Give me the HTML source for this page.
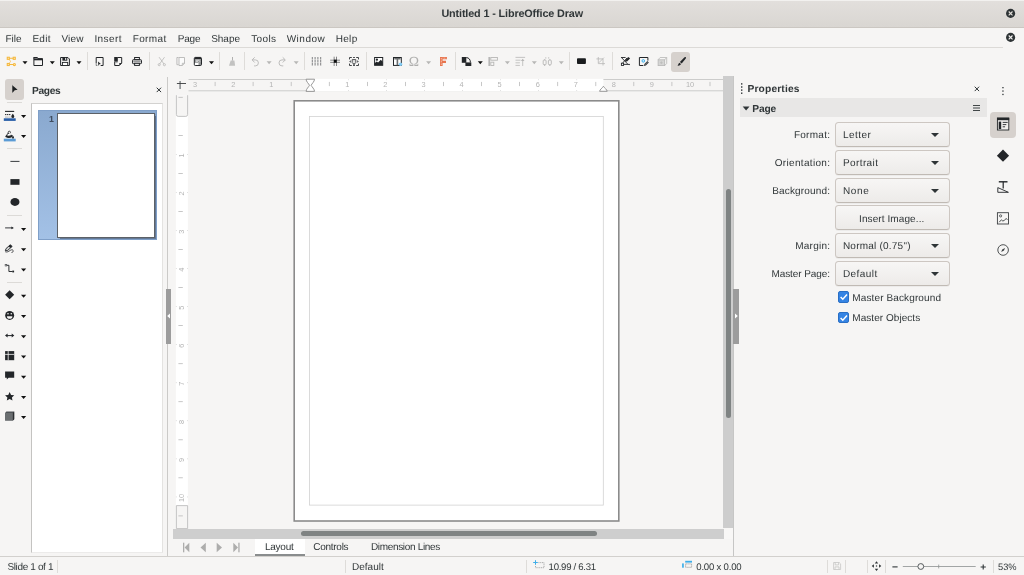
<!DOCTYPE html>
<html lang="en"><head><meta charset="utf-8"><title>Untitled 1 - LibreOffice Draw</title>
<style>
html,body{margin:0;padding:0;}
body{width:1024px;height:575px;overflow:hidden;background:#f6f5f4;position:relative;font-family:"Liberation Sans",sans-serif;color:#2e3436;}
div,span,svg{position:absolute;box-sizing:border-box;}
.t{white-space:nowrap;line-height:1em;margin-left:-0.6px;}
#titlebar{left:0;top:0;width:1024px;height:28px;background:linear-gradient(#e2dfdc,#d9d6d2);border-top:1px solid #f2f1ef;border-bottom:1.3px solid #cbc7c2;}
#menubar{left:0;top:28px;width:1024px;height:20px;background:#f6f5f4;}
#menuline{left:0;top:47px;width:1003px;height:1px;background:#dcdad7;}
.vsep{width:1px;background:#dedcd9;}
.hsep{height:1px;background:#dcdad7;}
.active{background:#d6d1cd;border-radius:3px;}
.combo{left:834.7px;width:115px;height:25px;border:1px solid #cdc7c2;border-bottom-color:#c0bab4;border-radius:3.5px;background:linear-gradient(#f7f6f5,#edebe9);box-shadow:0 1px 0 rgba(0,0,0,0.04);}
.combo i{position:absolute;right:9.3px;top:10.4px;width:0;height:0;border-left:4.1px solid transparent;border-right:4.1px solid transparent;border-top:4.4px solid #2e3436;}
.chk{left:837.6px;width:11.7px;height:11.7px;border-radius:2px;background:#3584e4;border:0.5px solid #2a6fc4;}
.arr{width:0;height:0;border-left:2.5px solid transparent;border-right:2.5px solid transparent;border-top:3px solid #111;}
.arr.g{border-top-color:#b5b5b3;}

</style></head><body>
<div id="titlebar"></div>
<svg style="left:1005px;top:8px" width="11" height="11" viewBox="0 0 11 11"><circle cx="5.6" cy="5.4" r="4.55" fill="#2e3436"/><path d="M3.7 3.5l3.8 3.8M7.5 3.5l-3.8 3.8" stroke="#e4e1dd" stroke-width="1.1"/></svg>
<div id="menubar"></div>
<svg style="left:1005px;top:32px" width="11" height="11" viewBox="0 0 11 11"><circle cx="5.6" cy="5.4" r="4.55" fill="#2e3436"/><path d="M3.7 3.5l3.8 3.8M7.5 3.5l-3.8 3.8" stroke="#f6f5f4" stroke-width="1.1"/></svg>
<div id="menuline"></div>

<!-- toolbar separators -->
<div class="vsep" style="left:87px;top:52px;height:18px"></div>
<div class="vsep" style="left:149px;top:52px;height:18px"></div>
<div class="vsep" style="left:219px;top:52px;height:18px"></div>
<div class="vsep" style="left:244px;top:52px;height:18px"></div>
<div class="vsep" style="left:304px;top:52px;height:18px"></div>
<div class="vsep" style="left:366px;top:52px;height:18px"></div>
<div class="vsep" style="left:455px;top:52px;height:18px"></div>
<div class="vsep" style="left:569px;top:52px;height:18px"></div>
<div class="vsep" style="left:612px;top:52px;height:18px"></div>
<div class="active" style="left:671px;top:51.5px;width:19px;height:20px"></div>
<svg style="left:0;top:48px" width="700" height="28" viewBox="0 48 700 28" fill="none">
<g transform="translate(6.7 56.7)"><g stroke="#f5b83d" stroke-width="1.05" fill="#fbe9c4"><rect x="0.55" y="0.55" width="2.1" height="2.1"/><rect x="6.5" y="0.55" width="2.1" height="2.1"/><rect x="0.55" y="6.75" width="2.1" height="2.1"/><circle cx="7.65" cy="7.8" r="1.1"/><path d="M2.7 1.5h3.8M2.7 7.8h3.8" fill="none"/><path d="M2.4 2.9c0.9 0.5 1.4 1 1.4 1.8s-0.5 1.3-1.4 1.8" fill="none" stroke-width="0.9" opacity="0.75"/></g></g>
<path d="M22.50 61.20h5.0l-2.5 3.0z" fill="#111"/>
<g transform="translate(33.4 57)"><path d="M0.5 0.5h3.2l0.9 1.1h4.5v6.9h-8.6z" stroke="#232629" stroke-width="1"/><rect x="0.5" y="1.6" width="8.6" height="1.7" fill="#232629"/><path d="M0 0h3.9l1 1.4h-4.9z" fill="#232629" opacity="0.75"/></g>
<path d="M49.80 61.20h5.0l-2.5 3.0z" fill="#111"/>
<g transform="translate(60.1 57)"><path d="M0.5 0.5h7.3l1.5 1.5v6.5h-8.8z" stroke="#232629" stroke-width="1"/><rect x="2.3" y="0.5" width="4.9" height="3.2" fill="#232629"/><rect x="5.0" y="0.9" width="1.1" height="2" fill="#e8e8e8"/><rect x="2.3" y="5.4" width="5.3" height="3.1" stroke="#232629" stroke-width="0.9" fill="#fff"/></g>
<path d="M76.50 61.20h5.0l-2.5 3.0z" fill="#111"/>
<g transform="translate(95.7 57)"><path d="M0.5 6v-5.5h6.9v8h-2.4" stroke="#232629" stroke-width="1"/><path d="M2.3 4.6l2.9 2.4l-1.6 0.3l-0.9 1.6z" fill="#232629"/><path d="M0.5 6v2.5h1.2" stroke="#232629" stroke-width="1" opacity="0.55"/></g>
<g transform="translate(114.2 57)"><path d="M3.4 0.5h4.1v5.6l-2.4 2.4h-4.6v-3.6" stroke="#232629" stroke-width="1"/><rect x="0" y="0" width="3.6" height="4.7" fill="#232629"/><path d="M5.1 8.5v-2.4h2.4z" fill="#232629"/><rect x="1.2" y="5.3" width="2.2" height="0.8" fill="#232629" opacity="0.5"/></g>
<g transform="translate(132 57)"><rect x="2.6" y="0.5" width="4.8" height="2.2" stroke="#232629" stroke-width="1"/><rect x="0.5" y="2.7" width="9" height="4" rx="0.8" stroke="#232629" stroke-width="1" fill="#d7d7d7"/><rect x="1.4" y="3.5" width="7.2" height="1.5" fill="#9a9b9c"/><rect x="2.6" y="6.3" width="4.8" height="2.1" stroke="#232629" stroke-width="1" fill="#fff"/></g>
<g transform="translate(157.8 57)"><g stroke="#b7b7b6" stroke-width="0.8"><path d="M1.3 0.2l4.9 6.8M6.7 0.2l-4.9 6.8"/><circle cx="1.4" cy="7.7" r="1.05"/><circle cx="6.6" cy="7.7" r="1.05"/></g></g>
<g transform="translate(176.4 57)"><g stroke="#b7b7b6" stroke-width="0.9"><path d="M2.2 0.5h-1.7v7.2h1.7"/><path d="M2.6 0.5h5.5v5.8l-2.2 2.2h-3.3z" fill="#fbfbfb"/><path d="M5.9 8.5v-2.2h2.2" /></g></g>
<g transform="translate(193.8 56.8)"><rect x="0.5" y="0.6" width="7.2" height="8.1" rx="1.1" stroke="#232629" stroke-width="1" fill="#909293"/><path d="M0.9 2.2v-0.6q0-1.1 1.1-1.1h4.2q1.1 0 1.1 1.1v0.6z" fill="#232629"/><rect x="2" y="3.0" width="3.8" height="0.75" fill="#f2f2f2"/><rect x="2" y="4.4" width="2.2" height="0.7" fill="#e6e6e6"/><rect x="1.1" y="6.0" width="3.6" height="2.2" fill="#fff"/><path d="M4.7 6l1.8-1.8" stroke="#e8e8e8" stroke-width="0.6"/></g>
<path d="M209.00 61.20h5.0l-2.5 3.0z" fill="#111"/>
<g transform="translate(229.1 57)"><path d="M3.4 0v3.6" stroke="#b0b0af" stroke-width="1"/><path d="M1.6 3.5h3.7l0.7 5.3h-6.1z" fill="#c2c2c1"/></g>
<g transform="translate(251.4 57)"><g stroke="#b7b7b6" stroke-width="0.9"><path d="M0.8 2.9h3.2a3 3 0 0 1 0 6h-1.3"/><path d="M3.3 0.3l-2.6 2.6l2.6 2.6"/></g></g>
<path d="M266.60 61.20h5.0l-2.5 3.0z" fill="#b7b7b6"/>
<g transform="translate(278 57)"><g stroke="#b7b7b6" stroke-width="0.9"><path d="M7.2 2.9h-3.2a3 3 0 0 0 0 6h1.3"/><path d="M4.7 0.3l2.6 2.6l-2.6 2.6"/></g></g>
<path d="M293.70 61.20h5.0l-2.5 3.0z" fill="#b7b7b6"/>
<g transform="translate(311.6 57)"><g stroke="#3f4245" stroke-width="0.65" stroke-dasharray="2.4 0.45"><path d="M0.7 0v9M3.5 0v9M6.3 0v9M9.1 0v9"/></g></g>
<g transform="translate(330.2 56.7)"><g stroke="#26292b" stroke-width="0.55"><path d="M3.95 0v9.3M6.3 0v9.3M0 3.5h9.8M0 5.65h9.8"/></g><rect x="3.7" y="3.0" width="2.8" height="3.0" fill="#0c0d0e"/></g>
<g transform="translate(349 57)"><g stroke="#3f4245" stroke-width="1"><path d="M0.5 2.4v-1.9h2.3M7.2 0.5h2.3v1.9M9.5 6.6v1.9h-2.3M2.8 8.5h-2.3v-1.9"/><path d="M4 0.5h2M4 8.5h2" stroke-width="0.9"/><path d="M3.2 2.6h3.6v3l-1 1.2h-1.6l-1-1.2z" stroke-width="0.9" fill="#e4e4e3"/></g><path d="M0.2 4.5l1.6-1.3v2.6zM9.8 4.5l-1.6-1.3v2.6z" fill="#3f4245"/><path d="M4.4 6.8h1.2v1.2h-1.2z" fill="#3f4245"/></g>
<g transform="translate(374.1 57)"><rect x="0.5" y="0.5" width="8.1" height="7.8" stroke="#232629" stroke-width="1" fill="#fff"/><path d="M0.5 8.3v-2.1l2.1-1.7l1.4 1.1l2.7-2.8l1.9 1.9v3.6z" fill="#232629"/><circle cx="2.8" cy="2.7" r="1.15" fill="#232629"/></g>
<g transform="translate(393 57)"><rect x="0.5" y="0.5" width="7.8" height="7.9" stroke="#232629" stroke-width="1" fill="#fff"/><path d="M1.3 1h6.2v1.5h-2.3v5.5h-1.6v-5.5h-2.3z" fill="#6b6e70"/><circle cx="7.5" cy="7.3" r="1.75" fill="#84cdf6"/></g>
<path d="M426.10 61.20h5.0l-2.5 3.0z" fill="#b7b7b6"/>
<g transform="translate(440 57)"><path d="M0 0h7v2.3h-4.4v1.5h3.4v2.1h-3.4v3.1h-2.6z" fill="#e8754e"/><path d="M1.3 1.1v7.4" stroke="#fbe3da" stroke-width="0.7" stroke-dasharray="0.9 0.6"/><path d="M2.6 1.15h3.8" stroke="#fbe3da" stroke-width="0.6" stroke-dasharray="0.9 0.6"/></g>
<g transform="translate(461.8 57)"><rect x="0" y="0" width="4.5" height="5.8" fill="#232629"/><rect x="3.6" y="5.4" width="5.9" height="3.6" fill="#232629"/><path d="M4.5 0.6c2.6 0 4.1 2 4.1 4.8" stroke="#232629" stroke-width="1"/></g>
<path d="M477.80 61.20h5.0l-2.5 3.0z" fill="#111"/>
<g transform="translate(488.4 57)"><rect x="0" y="0" width="1.7" height="9" fill="#b7b7b6"/><rect x="2.4" y="0.5" width="6.6" height="2.7" stroke="#b7b7b6" stroke-width="0.9"/><rect x="2.4" y="5.2" width="3" height="3.3" stroke="#b7b7b6" stroke-width="0.9"/></g>
<path d="M504.90 61.20h5.0l-2.5 3.0z" fill="#b7b7b6"/>
<g transform="translate(515.5 57)"><g stroke="#b7b7b6" stroke-width="0.8"><path d="M0 0.4h9.6M0 3.2h5M0 5.8h4.4M0 8.4h4.4M7.2 2.6v6.4"/></g><path d="M5.4 4l1.8-2.2l1.8 2.2z" fill="#b7b7b6"/></g>
<path d="M531.80 61.20h5.0l-2.5 3.0z" fill="#b7b7b6"/>
<g transform="translate(542.4 57)"><g stroke="#b7b7b6" stroke-width="0.9"><rect x="0.8" y="3.1" width="2.9" height="4.6" rx="0.8"/><rect x="6.0" y="3.1" width="2.9" height="4.6" rx="0.8"/><path d="M2.2 7.7v1.3M7.4 7.7v1.3M2.2 2.2v0.9M7.4 2.2v0.9"/></g><path d="M3.8 0l-1.3 0.9l1.3 0.9zM5.9 0l1.3 0.9l-1.3 0.9z" fill="#b7b7b6"/></g>
<path d="M558.80 61.20h5.0l-2.5 3.0z" fill="#b7b7b6"/>
<rect x="577" y="58.2" width="8.9" height="5.7" rx="0.9" fill="#1a1c1e"/>
<g transform="translate(596.4 57)"><g stroke="#b7b7b6" stroke-width="0.8"><path d="M1.9 0v6.6h6.7M0 1.9h6.6v6.6M7.6 0.6l-5.2 5.2"/></g></g>
<g transform="translate(620.7 57)"><g stroke="#232629" stroke-width="0.9"><path d="M0.3 0.5h4.6M1 0.8l6.3 6.6M6.4 0.8l-4.6 5.4"/><rect x="0.7" y="6.2" width="2.2" height="2.2" fill="#fff"/><path d="M2.9 7.4h5.6"/></g><path d="M4.2 4.6l0.5-1.6l3.1-3l1.6 1.5l-3.1 3.1z" fill="#232629"/><path d="M8.3 6.7l1.1 0.8l-1.1 0.8z" fill="#232629"/></g>
<g transform="translate(638.9 57)"><path d="M9 3.6v-3.1h-8.5v8h3.9" stroke="#232629" stroke-width="1"/><circle cx="4.4" cy="3.9" r="1.3" stroke="#3daee9" stroke-width="1.0" fill="#d9effb"/><path d="M4.9 8.9l0.6-2l3-3l1.5 1.5l-3 3z" fill="#3a3e41"/><path d="M6.3 7.6l2.6-2.6" stroke="#9a9c9d" stroke-width="0.5"/></g>
<g transform="translate(657.6 57)"><g stroke="#b7b7b6" stroke-width="0.8"><path d="M0.5 2.8l2-2.3h6.6v5.9l-2 2.2"/><path d="M7.1 2.8l2-2.3"/><rect x="0.5" y="2.8" width="6.6" height="5.8" fill="#d5d5d4"/><path d="M3.8 4.3v2.8M2.4 5.7h2.8" stroke-width="0.6"/></g></g>
<g transform="translate(677 57)"><path d="M8.5 0c0.7 0.3 0.6 1.1 0.1 1.8l-3.9 4.7l-1.8-1.5l4.1-4.3c0.5-0.5 1-0.9 1.5-0.7z" fill="#232629"/><path d="M2.3 5.7l1.7 1.4c-0.6 1.4-2.1 1.9-3.6 1.6c0.9-0.7 0.9-2 1.9-3z" fill="#232629"/></g>
</svg>

<!-- left vertical toolbar -->
<div class="active" style="left:5px;top:79px;width:19px;height:20.5px"></div>
<div class="hsep" style="left:7px;top:102px;width:15px"></div>
<div class="hsep" style="left:7px;top:148px;width:15px"></div>
<div class="hsep" style="left:7px;top:215px;width:15px"></div>
<div class="hsep" style="left:7px;top:281.5px;width:15px"></div>
<svg style="left:0;top:76px" width="30" height="360" viewBox="0 76 30 360" fill="none">
<path d="M12.3 84.5l0.3 1l5 4.3l-2.9 0.5l-2.2 2.5l-0.2-0.1z" fill="#1d2022"/>
<path d="M5 111.4h9.2" stroke="#232629" stroke-width="1.1"/><path d="M5 114.6h6" stroke="#232629" stroke-width="1" stroke-dasharray="1.3 0.6"/><path d="M5 117.1h5.4" stroke="#8b8d8e" stroke-width="0.9" stroke-dasharray="0.7 0.5"/><path d="M12.8 113.8c0.9 1.3 1.5 2 1.5 2.8a1.5 1.5 0 0 1-3 0c0-0.8 0.6-1.5 1.5-2.8z" fill="#232629"/><rect x="3.8" y="118.3" width="11.9" height="2.6" fill="#2a5fa8"/>
<path d="M21.00 115.10h5.2l-2.6 3.0z" fill="#111"/>
<path d="M8.2 133.2v-1q0-1 1.1-1q1.1 0 1.1 1v1" stroke="#232629" stroke-width="0.8"/><path d="M8 132.8l-2.8 3.6c0.9 1.5 4.6 2 6.6 0.9l1.3-1.6z" fill="#232629"/><path d="M8.2 134l1.8-0.4l1.6 1.3l-3 0.9l-1.8-0.5z" fill="#fff"/><path d="M13 135.8c0.6 0.9 1 1.4 1 1.9a1 1 0 0 1-2 0c0-0.5 0.4-1 1-1.9z" fill="#232629"/><rect x="3.8" y="138.7" width="11.9" height="2.7" fill="#5b9bd5"/>
<path d="M21.00 135.10h5.2l-2.6 3.0z" fill="#111"/>
<path d="M10.4 161.4h9.1" stroke="#232629" stroke-width="0.9"/>
<rect x="10.4" y="179.1" width="9.1" height="5.7" fill="#232629"/>
<ellipse cx="14.95" cy="202" rx="4.55" ry="3.9" fill="#232629"/>
<path d="M5.1 227.9h7.4" stroke="#232629" stroke-width="0.9"/><path d="M11.4 226.6l2.5 1.3l-2.5 1.3z" fill="#232629"/>
<path d="M21.00 228.00h5.2l-2.6 3.0z" fill="#111"/>
<path d="M5.3 250.8l0.7-2.2l4.4-3.9l1.7 1.8l-4.4 3.9z" stroke="#232629" stroke-width="0.9" fill="#cfd0d0"/><path d="M8.6 246.2l1.8-1.5l1.7 1.8l-1.8 1.5z" fill="#232629"/><path d="M5.3 251.8c1.6 0.6 3.4-0.3 4.6-1.2c1.2-0.9 2.6-1.2 3.2-0.2c0.6 1-0.4 2-1.6 2.1" stroke="#232629" stroke-width="0.8"/>
<path d="M21.00 248.30h5.2l-2.6 3.0z" fill="#111"/>
<path d="M6.3 265.3h2.6v6.2h3.6" stroke="#232629" stroke-width="0.95"/><rect x="5.1" y="264.3" width="1.7" height="1.7" fill="#fff" stroke="#232629" stroke-width="0.5"/><rect x="12.3" y="270.6" width="1.8" height="1.8" fill="#232629"/>
<path d="M21.00 268.50h5.2l-2.6 3.0z" fill="#111"/>
<path d="M9.65 290.3l4.55 4.5l-4.55 4.5l-4.55-4.5z" fill="#232629"/>
<path d="M21.00 294.80h5.2l-2.6 3.0z" fill="#111"/>
<circle cx="9.65" cy="315.4" r="4.5" fill="#232629"/><circle cx="8" cy="313.8" r="0.8" fill="#f6f5f4"/><circle cx="11.3" cy="313.8" r="0.8" fill="#f6f5f4"/><path d="M6.9 316.2h5.5a2.75 2.6 0 0 1-5.5 0z" fill="#f6f5f4"/>
<path d="M21.00 315.00h5.2l-2.6 3.0z" fill="#111"/>
<path d="M6.6 335.6h6" stroke="#232629" stroke-width="1"/><path d="M7.6 333.6l-2.6 2l2.6 2zM11.7 333.6l2.6 2l-2.6 2z" fill="#232629"/>
<path d="M21.00 335.20h5.2l-2.6 3.0z" fill="#111"/>
<rect x="5.1" y="351.1" width="9.1" height="9.1" fill="#232629"/><path d="M5.1 354.4h9.1M8.2 351.1v9.1" stroke="#f6f5f4" stroke-width="0.8"/>
<path d="M21.00 355.50h5.2l-2.6 3.0z" fill="#111"/>
<path d="M5.1 371.4h9.1v6.4h-5.6l-1.8 1.7v-1.7h-1.7z" fill="#232629"/>
<path d="M21.00 375.70h5.2l-2.6 3.0z" fill="#111"/>
<path d="M9.65 392l1.4 2.9l3.2 0.4l-2.35 2.2l0.6 3.1l-2.85-1.55l-2.85 1.55l0.6-3.1l-2.35-2.2l3.2-0.4z" fill="#232629"/>
<path d="M21.00 395.90h5.2l-2.6 3.0z" fill="#111"/>
<path d="M5.1 413l1.3-1.4h7.8v7.6l-1.3 1.4h-7.8z" fill="#4f5356"/><path d="M5.1 413h7.8v7.6h-7.8z" fill="#6a6e70"/><path d="M12.9 413l1.3-1.4v7.6l-1.3 1.4z" fill="#2b2e30"/>
<path d="M21.00 416.00h5.2l-2.6 3.0z" fill="#111"/>
</svg>

<!-- pages panel -->
<div id="pagelist" style="left:31.2px;top:103px;width:131.9px;height:449.6px;background:#fff;border:0.9px solid #d3d2d0;border-left-color:#c4c3c1;border-right-color:#e4e3e1;border-bottom-color:#ecebea"></div>
<div style="left:38px;top:110px;width:118.5px;height:130px;background:linear-gradient(#8aa9cf,#a3c1e6);border:0.5px solid #7f9fc8"></div>
<div style="left:56.5px;top:112.5px;width:98px;height:125px;background:#fff;border:1px solid #5c6167;box-shadow:0.6px 0.6px 0.8px rgba(40,50,70,0.5)"></div>
<svg style="left:154.7px;top:85.6px" width="8" height="8" viewBox="0 0 8 8"><path d="M1.7 1.7l4.4 4.4M6.1 1.7L1.7 6.1" stroke="#2e3436" stroke-width="1"/></svg>
<!-- splitter -->
<div style="left:167.1px;top:77px;width:0.9px;height:479px;background:#cbcac8"></div>
<div style="left:166px;top:289px;width:5px;height:55px;background:#9c9c9c"></div>
<svg style="left:166px;top:312px" width="5" height="8" viewBox="0 0 5 8"><path d="M4 1.5L1.2 4L4 6.5z" fill="#fff"/></svg>

<!-- canvas area -->
<svg style="left:174px;top:76px;will-change:transform" width="550" height="18" viewBox="174 76 550 18" font-family="Liberation Sans, sans-serif" font-size="7.4" fill="#b4b4b4" text-anchor="middle">
<path d="M180.1 81v7.9" stroke="#85888a" stroke-width="1.5" fill="none"/><path d="M176.9 83.5h9.1" stroke="#3b3d3e" stroke-width="0.9" fill="none"/>
<path d="M188.5 79.5h534.6M188.5 90.8h534.6" stroke="#cccccb" stroke-width="1" fill="none"/>
<rect x="310.2" y="78.9" width="293.2" height="12.5" fill="#ffffff"/>
<text x="195.1" y="86.8">3</text>
<rect x="214.7" y="81.9" width="0.8" height="4.2" fill="#b9b9b9"/>
<text x="233.2" y="86.8">2</text>
<rect x="252.7" y="81.9" width="0.8" height="4.2" fill="#b9b9b9"/>
<text x="271.2" y="86.8">1</text>
<rect x="290.8" y="81.9" width="0.8" height="4.2" fill="#b9b9b9"/>
<rect x="328.9" y="81.9" width="0.8" height="4.2" fill="#b9b9b9"/>
<text x="347.4" y="86.8">1</text>
<rect x="348.0" y="79.3" width="0.7" height="0.9" fill="#cfcfcf"/><rect x="348.0" y="90" width="0.7" height="0.9" fill="#cfcfcf"/>
<rect x="367.0" y="81.9" width="0.8" height="4.2" fill="#b9b9b9"/>
<text x="385.4" y="86.8">2</text>
<rect x="386.0" y="79.3" width="0.7" height="0.9" fill="#cfcfcf"/><rect x="386.0" y="90" width="0.7" height="0.9" fill="#cfcfcf"/>
<rect x="405.0" y="81.9" width="0.8" height="4.2" fill="#b9b9b9"/>
<text x="423.5" y="86.8">3</text>
<rect x="424.1" y="79.3" width="0.7" height="0.9" fill="#cfcfcf"/><rect x="424.1" y="90" width="0.7" height="0.9" fill="#cfcfcf"/>
<rect x="443.1" y="81.9" width="0.8" height="4.2" fill="#b9b9b9"/>
<text x="461.6" y="86.8">4</text>
<rect x="462.2" y="79.3" width="0.7" height="0.9" fill="#cfcfcf"/><rect x="462.2" y="90" width="0.7" height="0.9" fill="#cfcfcf"/>
<rect x="481.2" y="81.9" width="0.8" height="4.2" fill="#b9b9b9"/>
<text x="499.6" y="86.8">5</text>
<rect x="500.2" y="79.3" width="0.7" height="0.9" fill="#cfcfcf"/><rect x="500.2" y="90" width="0.7" height="0.9" fill="#cfcfcf"/>
<rect x="519.2" y="81.9" width="0.8" height="4.2" fill="#b9b9b9"/>
<text x="537.7" y="86.8">6</text>
<rect x="538.3" y="79.3" width="0.7" height="0.9" fill="#cfcfcf"/><rect x="538.3" y="90" width="0.7" height="0.9" fill="#cfcfcf"/>
<rect x="557.3" y="81.9" width="0.8" height="4.2" fill="#b9b9b9"/>
<text x="575.8" y="86.8">7</text>
<rect x="576.4" y="79.3" width="0.7" height="0.9" fill="#cfcfcf"/><rect x="576.4" y="90" width="0.7" height="0.9" fill="#cfcfcf"/>
<rect x="595.4" y="81.9" width="0.8" height="4.2" fill="#b9b9b9"/>
<text x="613.9" y="86.8">8</text>
<rect x="633.4" y="81.9" width="0.8" height="4.2" fill="#b9b9b9"/>
<text x="651.9" y="86.8">9</text>
<rect x="671.5" y="81.9" width="0.8" height="4.2" fill="#b9b9b9"/>
<text x="690.0" y="86.8">10</text>
<rect x="709.6" y="81.9" width="0.8" height="4.2" fill="#b9b9b9"/>
<path d="M306.1 79.2h8.4c0 2.4-2.6 4.4-3.4 6.1c0.8 1.7 3.4 3.7 3.4 6.1h-8.4c0-2.4 2.6-4.4 3.4-6.1c-0.8-1.7-3.4-3.7-3.4-6.1z" fill="#fff" stroke="#8b8b8b" stroke-width="0.9"/>
<path d="M599.6 91.3c0.3-2 2.6-3 3.8-5c1.2 2 3.5 3 3.8 5z" fill="#fff" stroke="#8b8b8b" stroke-width="0.9"/>
</svg>
<svg style="left:174px;top:91px;will-change:transform" width="16" height="439" viewBox="174 91 16 439" font-family="Liberation Sans, sans-serif" font-size="7.4" fill="#b4b4b4" text-anchor="middle">
<rect x="175.9" y="91.5" width="12" height="437" fill="#ffffff"/>
<rect x="175.9" y="91" width="12" height="4.2" fill="#f6f5f4"/><path d="M176.4 95.2v19.4q0 1.8 1.8 1.8h7.6q1.8 0 1.8-1.8V95.2" fill="#f6f5f4" stroke="#bdbdbd" stroke-width="0.9"/>
<path d="M176.4 528.6v-23h11.2v23z" fill="#f6f5f4" stroke="#bdbdbd" stroke-width="0.9"/>
<rect x="178.4" y="96.9" width="4.4" height="0.8" fill="#b9b9b9"/>
<rect x="178.4" y="135.0" width="4.4" height="0.8" fill="#b9b9b9"/>
<text transform="translate(184.2 155.5) rotate(-90)" x="0" y="0">1</text>
<rect x="175.9" y="154.1" width="0.9" height="0.7" fill="#cfcfcf"/><rect x="187" y="154.1" width="0.9" height="0.7" fill="#cfcfcf"/>
<rect x="178.4" y="173.0" width="4.4" height="0.8" fill="#b9b9b9"/>
<text transform="translate(184.2 193.5) rotate(-90)" x="0" y="0">2</text>
<rect x="175.9" y="192.1" width="0.9" height="0.7" fill="#cfcfcf"/><rect x="187" y="192.1" width="0.9" height="0.7" fill="#cfcfcf"/>
<rect x="178.4" y="211.1" width="4.4" height="0.8" fill="#b9b9b9"/>
<text transform="translate(184.2 231.6) rotate(-90)" x="0" y="0">3</text>
<rect x="175.9" y="230.2" width="0.9" height="0.7" fill="#cfcfcf"/><rect x="187" y="230.2" width="0.9" height="0.7" fill="#cfcfcf"/>
<rect x="178.4" y="249.1" width="4.4" height="0.8" fill="#b9b9b9"/>
<text transform="translate(184.2 269.6) rotate(-90)" x="0" y="0">4</text>
<rect x="175.9" y="268.2" width="0.9" height="0.7" fill="#cfcfcf"/><rect x="187" y="268.2" width="0.9" height="0.7" fill="#cfcfcf"/>
<rect x="178.4" y="287.2" width="4.4" height="0.8" fill="#b9b9b9"/>
<text transform="translate(184.2 307.7) rotate(-90)" x="0" y="0">5</text>
<rect x="175.9" y="306.3" width="0.9" height="0.7" fill="#cfcfcf"/><rect x="187" y="306.3" width="0.9" height="0.7" fill="#cfcfcf"/>
<rect x="178.4" y="325.2" width="4.4" height="0.8" fill="#b9b9b9"/>
<text transform="translate(184.2 345.8) rotate(-90)" x="0" y="0">6</text>
<rect x="175.9" y="344.3" width="0.9" height="0.7" fill="#cfcfcf"/><rect x="187" y="344.3" width="0.9" height="0.7" fill="#cfcfcf"/>
<rect x="178.4" y="363.3" width="4.4" height="0.8" fill="#b9b9b9"/>
<text transform="translate(184.2 383.8) rotate(-90)" x="0" y="0">7</text>
<rect x="175.9" y="382.4" width="0.9" height="0.7" fill="#cfcfcf"/><rect x="187" y="382.4" width="0.9" height="0.7" fill="#cfcfcf"/>
<rect x="178.4" y="401.3" width="4.4" height="0.8" fill="#b9b9b9"/>
<text transform="translate(184.2 421.9) rotate(-90)" x="0" y="0">8</text>
<rect x="175.9" y="420.4" width="0.9" height="0.7" fill="#cfcfcf"/><rect x="187" y="420.4" width="0.9" height="0.7" fill="#cfcfcf"/>
<rect x="178.4" y="439.4" width="4.4" height="0.8" fill="#b9b9b9"/>
<text transform="translate(184.2 459.9) rotate(-90)" x="0" y="0">9</text>
<rect x="175.9" y="458.5" width="0.9" height="0.7" fill="#cfcfcf"/><rect x="187" y="458.5" width="0.9" height="0.7" fill="#cfcfcf"/>
<rect x="178.4" y="477.4" width="4.4" height="0.8" fill="#b9b9b9"/>
<text transform="translate(184.2 498.0) rotate(-90)" x="0" y="0">10</text>
<rect x="175.9" y="496.6" width="0.9" height="0.7" fill="#cfcfcf"/><rect x="187" y="496.6" width="0.9" height="0.7" fill="#cfcfcf"/>
<rect x="178.4" y="515.5" width="4.4" height="0.8" fill="#b9b9b9"/>
</svg>
<svg id="page" style="left:290px;top:97px" width="334" height="428" viewBox="290 97 334 428"><rect x="294.2" y="100.8" width="324.6" height="420.2" fill="#fff" stroke="#8b8b8b" stroke-width="1.6"/><rect x="309.5" y="116.4" width="293.8" height="388.7" fill="none" stroke="#d2d2d2" stroke-width="0.8"/></svg>
<!-- scrollbars -->
<div style="left:723.1px;top:76.2px;width:10.3px;height:451.8px;background:#cdcdcd"></div>
<div style="left:726px;top:189px;width:5.3px;height:228.5px;background:#7f8383;border-radius:3px"></div>
<div style="left:173px;top:528.6px;width:550.5px;height:10.4px;background:#cecece"></div>
<div style="left:301px;top:531px;width:295.5px;height:5.4px;background:#7f8383;border-radius:3px"></div>
<div style="left:723.5px;top:528px;width:10px;height:11px;background:#f8f7f6"></div>

<!-- tab bar -->
<div style="left:255px;top:539px;width:49.5px;height:17px;background:#ffffff"></div>
<div style="left:255px;top:553.6px;width:49.5px;height:2.2px;background:#8a8d8e"></div>
<svg style="left:180px;top:541px" width="64" height="13" viewBox="0 0 64 13">
<g fill="#adadac"><rect x="3" y="1.7" width="1.3" height="9.6"/><path d="M9.3 1.7v9.6L4.6 6.5z"/><path d="M25.8 1.7v9.6l-5.3-4.8z"/><path d="M36.7 1.7v9.6l5.3-4.8z"/><path d="M53.3 1.7v9.6l4.7-4.8z"/><rect x="58.3" y="1.7" width="1.3" height="9.6"/></g></svg>

<!-- status bar -->
<div class="hsep" style="left:0;top:555.7px;width:1024px;background:#d2d0cd"></div>
<div class="vsep" style="left:57px;top:559.6px;height:13.6px"></div>
<div class="vsep" style="left:345px;top:559.6px;height:13.6px"></div>
<div class="vsep" style="left:525.5px;top:559.6px;height:13.6px"></div>
<div class="vsep" style="left:827px;top:559.6px;height:13.6px"></div>
<div class="vsep" style="left:844.5px;top:559.6px;height:13.6px"></div>
<div class="vsep" style="left:867px;top:559.6px;height:13.6px"></div>
<div class="vsep" style="left:884.5px;top:559.6px;height:13.6px"></div>
<div class="vsep" style="left:992.5px;top:559.6px;height:13.6px"></div>
<svg style="left:520px;top:556px" width="504" height="19" viewBox="520 556 504 19" fill="none">
<path d="M533.2 562.5h4.6M535.5 560.2v4.6" stroke="#3daee9" stroke-width="1"/><path d="M538.4 562.6h5.6v5.1h-8.5v-2.4" stroke="#a4a5a5" stroke-width="0.9" stroke-dasharray="1.1 0.7"/>
<rect x="685.2" y="560.8" width="6.8" height="1.8" fill="#3daee9"/><rect x="682.1" y="563.4" width="1.7" height="4.3" fill="#3daee9"/><rect x="685.6" y="563.9" width="6" height="3.4" stroke="#9a9b9b" stroke-width="0.9" stroke-dasharray="1.2 0.7"/>
<g stroke="#c6c6c5" stroke-width="0.8"><path d="M833.6 562.5h5.6l1.4 1.4v5.6h-7z"/><path d="M835.2 562.5v2.4h3.4v-2.4M835 569.5v-2.6h4v2.6"/></g>
<g fill="#2e3436"><path d="M876.5 561.2l1.7 2.2h-3.4zM876.5 570.9l1.7-2.2h-3.4zM871.7 566l2.2-1.7v3.4zM881.3 566l-2.2-1.7v3.4z"/><rect x="875.9" y="565.4" width="1.2" height="1.2"/></g>
<path d="M892.4 566.9h5.2" stroke="#2e3436" stroke-width="1.1"/><path d="M902.8 566.5h72.9" stroke="#8d9091" stroke-width="0.8"/><path d="M938.7 564.6v3.8" stroke="#8d9091" stroke-width="0.8"/><circle cx="920.8" cy="566.5" r="2.9" fill="#f6f5f4" stroke="#555a5c" stroke-width="1"/><path d="M980.6 567h5.2M983.2 564.4v5.2" stroke="#2e3436" stroke-width="1.1"/>
</svg>

<!-- sidebar -->
<div style="left:733.4px;top:76.2px;width:0.9px;height:479.6px;background:#c6c6c5"></div>
<div style="left:733px;top:289px;width:5.5px;height:55px;background:#9c9c9c"></div>
<svg style="left:733.5px;top:312px" width="5" height="8" viewBox="0 0 5 8"><path d="M1 1.5L3.8 4L1 6.5z" fill="#fff"/></svg>
<svg style="left:740px;top:82px" width="4" height="13" viewBox="0 0 4 13"><g fill="#2e3436"><rect x="1" y="1.2" width="1.4" height="1.4"/><rect x="1" y="4.3" width="1.4" height="1.4"/><rect x="1" y="7.4" width="1.4" height="1.4"/><rect x="1" y="10.5" width="1.4" height="1.4"/></g></svg>
<svg style="left:973px;top:84.5px" width="8" height="8" viewBox="0 0 8 8"><path d="M1.7 1.7l4.4 4.4M6.1 1.7L1.7 6.1" stroke="#2e3436" stroke-width="1"/></svg>
<div style="left:740px;top:98px;width:246.6px;height:19.3px;background:#e8e7e6"></div>
<svg style="left:742px;top:104.5px" width="8" height="7" viewBox="0 0 8 7"><path d="M0.7 1.6h6.8L4.1 5.6z" fill="#2e3436"/></svg>
<svg style="left:972px;top:104px" width="9" height="8" viewBox="0 0 9 8"><path d="M1 1.5h7M1 4h7M1 6.5h7" stroke="#2e3436" stroke-width="0.9"/></svg>
<div class="combo" style="top:122px"><i></i></div>
<div class="combo" style="top:150px"><i></i></div>
<div class="combo" style="top:177.5px"><i></i></div>
<div class="combo" style="top:205.3px"></div>
<div class="combo" style="top:233px"><i></i></div>
<div class="combo" style="top:260.7px"><i></i></div>
<div class="chk" style="top:291.3px"></div>
<svg style="left:837.7px;top:291.4px" width="11.5" height="11.5" viewBox="0 0 11.5 11.5"><path d="M2.6 6l2.2 2.2L9 3.6" stroke="#fff" stroke-width="1.5" fill="none"/></svg>
<div class="chk" style="top:311.5px"></div>
<svg style="left:837.7px;top:311.6px" width="11.5" height="11.5" viewBox="0 0 11.5 11.5"><path d="M2.6 6l2.2 2.2L9 3.6" stroke="#fff" stroke-width="1.5" fill="none"/></svg>
<!-- sidebar tab bar -->
<svg style="left:1001px;top:85px" width="4" height="12" viewBox="0 0 4 12"><g fill="#2e3436"><rect x="1.3" y="2" width="1.3" height="1.3"/><rect x="1.3" y="5.4" width="1.3" height="1.3"/><rect x="1.3" y="8.8" width="1.3" height="1.3"/></g></svg>
<div class="active" style="left:989.5px;top:111.5px;width:26.5px;height:26px;border-radius:4px"></div>
<svg style="left:990px;top:110px" width="30" height="150" viewBox="990 110 30 150" fill="none">
<rect x="997.4" y="118.1" width="11.4" height="11.9" stroke="#232629" stroke-width="0.9" fill="#f1efed"/><rect x="997" y="117.7" width="12.2" height="2.5" fill="#232629"/><rect x="998.7" y="121.6" width="2.5" height="7.4" fill="#232629"/><path d="M1002.7 122.4h5M1002.7 124.6h3.6M1002.7 126.8h2.4" stroke="#232629" stroke-width="0.9"/>
<path d="M1003 149.6l6.1 6.1l-6.1 6.1l-6.1-6.1z" fill="#232629"/>
<path d="M998.8 181.8h8.7" stroke="#232629" stroke-width="1.4"/><path d="M1003.2 181.8v6.8" stroke="#232629" stroke-width="1.2"/><path d="M997.8 187.6v4.7h10.6z" stroke="#232629" stroke-width="0.9"/>
<rect x="997.4" y="212.7" width="11.1" height="11.3" stroke="#3b3f41" stroke-width="0.9"/><circle cx="1000.6" cy="215.9" r="1.1" stroke="#3b3f41" stroke-width="0.8"/><path d="M999.2 222.2l2.2-2.4l1.4 1.2l1.6-0.6l1.8-2l1.2 1.4" stroke="#3b3f41" stroke-width="0.9"/>
<circle cx="1003.1" cy="250" r="5.3" stroke="#3b3f41" stroke-width="0.9"/><path d="M1001.2 251.9l1-2.3l2.8-1.5l-1 2.3z" fill="#3b3f41"/>
</svg>

<div id="texts" style="left:0;top:0;width:1024px;height:575px;transform:rotate(0.004deg);will-change:transform;text-rendering:geometricPrecision">
<span class="t" id="t0" style="left:442px;font-size:10.8px;font-weight:700;color:#2e3436;top:9.25px;letter-spacing:-0.125px;">Untitled 1 - LibreOffice Draw</span>
<span class="t" id="t1" style="left:6px;font-size:10px;font-weight:400;color:#2e3436;top:35.25px;letter-spacing:-0.009px;">File</span>
<span class="t" id="t2" style="left:33px;font-size:10px;font-weight:400;color:#2e3436;top:35.25px;letter-spacing:0.288px;">Edit</span>
<span class="t" id="t3" style="left:62px;font-size:10px;font-weight:400;color:#2e3436;top:35.25px;letter-spacing:0.200px;">View</span>
<span class="t" id="t4" style="left:95px;font-size:10px;font-weight:400;color:#2e3436;top:35.25px;letter-spacing:0.417px;">Insert</span>
<span class="t" id="t5" style="left:133.25px;font-size:10px;font-weight:400;color:#2e3436;top:35.25px;letter-spacing:0.385px;">Format</span>
<span class="t" id="t6" style="left:178.25px;font-size:10px;font-weight:400;color:#2e3436;top:35.25px;letter-spacing:-0.170px;">Page</span>
<span class="t" id="t7" style="left:211.75px;font-size:10px;font-weight:400;color:#2e3436;top:35.25px;letter-spacing:-0.018px;">Shape</span>
<span class="t" id="t8" style="left:251.75px;font-size:10px;font-weight:400;color:#2e3436;top:35.25px;letter-spacing:0.372px;">Tools</span>
<span class="t" id="t9" style="left:287.25px;font-size:10px;font-weight:400;color:#2e3436;top:35.25px;letter-spacing:0.504px;">Window</span>
<span class="t" id="t10" style="left:336.25px;font-size:10px;font-weight:400;color:#2e3436;top:35.25px;letter-spacing:0.340px;">Help</span>
<span class="t" id="t11" style="left:32.7px;font-size:10.2px;font-weight:700;color:#2e3436;top:87.25px;letter-spacing:-0.374px;">Pages</span>
<span class="t" id="t12" style="left:49.5px;font-size:8.8px;font-weight:700;color:#3d4a5c;top:115.25px;letter-spacing:0.000px;">1</span>
<span class="t" id="t13" style="left:748.1px;font-size:10.2px;font-weight:700;color:#2e3436;top:85.25px;letter-spacing:0.170px;">Properties</span>
<span class="t" id="t14" style="left:752.9px;font-size:10.2px;font-weight:700;color:#2e3436;top:105.25px;letter-spacing:-0.129px;">Page</span>
<span class="t" id="t15" style="left:794.5px;font-size:10px;font-weight:400;color:#2e3436;top:131.25px;letter-spacing:0.274px;">Format:</span>
<span class="t" id="t16" style="left:775.3px;font-size:10px;font-weight:400;color:#2e3436;top:159.25px;letter-spacing:0.327px;">Orientation:</span>
<span class="t" id="t17" style="left:772.8px;font-size:10px;font-weight:400;color:#2e3436;top:187.25px;letter-spacing:0.164px;">Background:</span>
<span class="t" id="t18" style="left:795.8px;font-size:10px;font-weight:400;color:#2e3436;top:242.25px;letter-spacing:0.240px;">Margin:</span>
<span class="t" id="t19" style="left:772px;font-size:10px;font-weight:400;color:#2e3436;top:270.25px;letter-spacing:-0.080px;">Master Page:</span>
<span class="t" id="t20" style="left:843.5px;font-size:10px;font-weight:400;color:#2e3436;top:131.25px;letter-spacing:0.484px;">Letter</span>
<span class="t" id="t21" style="left:843.5px;font-size:10px;font-weight:400;color:#2e3436;top:159.25px;letter-spacing:0.409px;">Portrait</span>
<span class="t" id="t22" style="left:843.5px;font-size:10px;font-weight:400;color:#2e3436;top:187.25px;letter-spacing:0.664px;">None</span>
<span class="t" id="t23" style="left:859.6px;font-size:10px;font-weight:400;color:#2e3436;top:215.25px;letter-spacing:0.098px;">Insert Image...</span>
<span class="t" id="t24" style="left:843.5px;font-size:10px;font-weight:400;color:#2e3436;top:242.25px;letter-spacing:0.224px;">Normal (0.75&quot;)</span>
<span class="t" id="t25" style="left:843.5px;font-size:10px;font-weight:400;color:#2e3436;top:270.25px;letter-spacing:0.435px;">Default</span>
<span class="t" id="t26" style="left:852.9px;font-size:10px;font-weight:400;color:#2e3436;top:294.25px;letter-spacing:0.124px;">Master Background</span>
<span class="t" id="t27" style="left:852.9px;font-size:10px;font-weight:400;color:#2e3436;top:314.25px;letter-spacing:0.050px;">Master Objects</span>
<span class="t" id="t28" style="left:265.5px;font-size:10px;font-weight:400;color:#2e3436;top:543.25px;letter-spacing:-0.226px;">Layout</span>
<span class="t" id="t29" style="left:313.8px;font-size:10px;font-weight:400;color:#2e3436;top:543.25px;letter-spacing:-0.264px;">Controls</span>
<span class="t" id="t30" style="left:371.5px;font-size:10px;font-weight:400;color:#2e3436;top:543.25px;letter-spacing:-0.324px;">Dimension Lines</span>
<span class="t" id="t31" style="left:8px;font-size:10px;font-weight:400;color:#2e3436;top:563.25px;letter-spacing:-0.359px;">Slide 1 of 1</span>
<span class="t" id="t32" style="left:352.5px;font-size:10px;font-weight:400;color:#2e3436;top:563.25px;letter-spacing:0.035px;">Default</span>
<span class="t" id="t33" style="left:549.2px;font-size:9.6px;font-weight:400;color:#2e3436;top:563.25px;letter-spacing:-0.285px;">10.99 / 6.31</span>
<span class="t" id="t34" style="left:696.9px;font-size:9.6px;font-weight:400;color:#2e3436;top:563.25px;letter-spacing:-0.213px;">0.00 x 0.00</span>
<span class="t" id="t35" style="left:998.6px;font-size:9.3px;font-weight:400;color:#2e3436;top:563.25px;letter-spacing:-0.044px;">53%</span>
<span class="t" id="t36" style="left:409.4px;font-family:'Liberation Serif', serif;font-size:13.8px;font-weight:400;color:#aeaead;top:55.25px;letter-spacing:0.000px;">Ω</span>
</div>
</body></html>
